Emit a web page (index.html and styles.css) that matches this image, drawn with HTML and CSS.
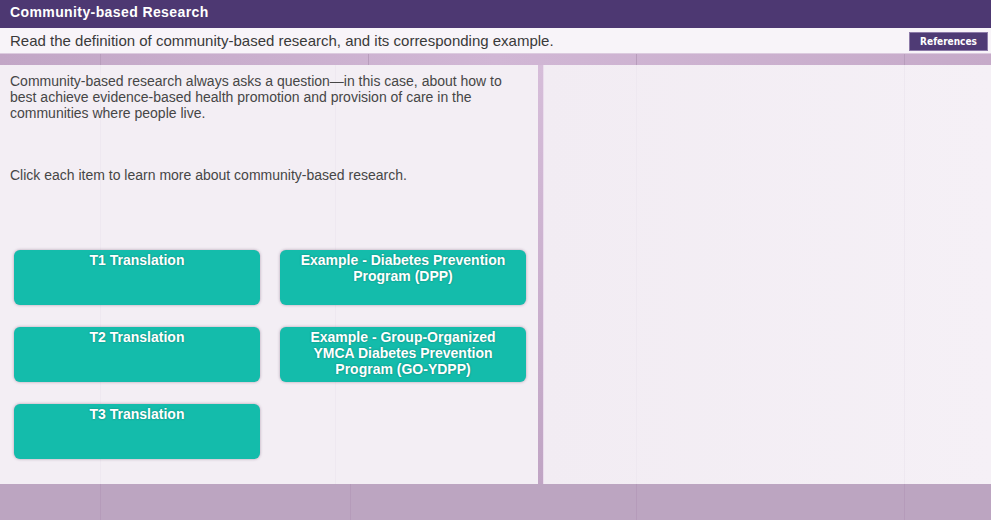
FILE: index.html
```html
<html>
  <head>
    <title>Community-based Research</title>
    <meta charset="utf-8" />
    <meta name="viewport" content="width=device-width, initial-scale=1" />
    <link rel="stylesheet" href="styles.css">
  </head>
  <body>
    <div class="title-bar">Community-based Research</div>
    <div class="instruction-bar">
      <span class="instruction">Read the definition of community-based research, and its corresponding example.</span>
      <button class="references">References</button>
    </div>
    <div class="strip"></div>
    <div class="content">
      <div class="left-panel">
        <p class="intro">Community-based research always asks a question&mdash;in this case, about how to best achieve evidence-based health promotion and provision of care in the communities where people live.</p>
        <p class="hint">Click each item to learn more about community-based research.</p>
        <div class="items">
          <div class="item">T1 Translation</div>
          <div class="item">Example - Diabetes Prevention Program (DPP)</div>
          <div class="item">T2 Translation</div>
          <div class="item">Example - Group-Organized YMCA Diabetes Prevention Program (GO-YDPP)</div>
          <div class="item">T3 Translation</div>
        </div>
      </div>
      <div class="divider"></div>
      <div class="right-panel"></div>
    </div>
    <div class="footer"></div>
  </body>
</html>
```

FILE: styles.css
```css
body {
  margin: 0;
  font-family: "Liberation Sans", Arial, sans-serif;
  background: #f3eef4;
  overflow: hidden;
}

.title-bar {
  height: 28px;
  line-height: 25px;
  padding-left: 10px;
  background: #4d3872;
  color: #fff;
  font-size: 14px;
  font-weight: bold;
  letter-spacing: 0.4px;
}

.instruction-bar {
  height: 25px;
  display: flex;
  align-items: center;
  justify-content: space-between;
  padding: 0 3px 0 10px;
  background: #f8f4f9;
  border-bottom: 1px solid #dccbdf;
}

.instruction {
  font-size: 15px;
  color: #3a3a3a;
  margin-top: -1px;
}

.references {
  width: 79px;
  height: 19px;
  margin-top: 1px;
  padding: 0;
  background: #4f3b75;
  border: 1px solid #8c7aa8;
  color: #fff;
  font-family: "DejaVu Sans Condensed", "DejaVu Sans", sans-serif;
  font-size: 10px;
  font-weight: bold;
}

.strip {
  height: 11px;
  background:
    linear-gradient(#b89dbc, #b89dbc) 100px 0 / 1px 100% no-repeat,
    linear-gradient(#b89dbc, #b89dbc) 368px 0 / 1px 100% no-repeat,
    linear-gradient(#b89dbc, #b89dbc) 636px 0 / 1px 100% no-repeat,
    linear-gradient(#b89dbc, #b89dbc) 904px 0 / 1px 100% no-repeat,
    linear-gradient(to right, #c2a6c6, #d1b7d5 50%, #c6aac9);
}

.content {
  display: flex;
  height: 419px;
}

.left-panel {
  width: 538px;
  padding-top: 8px;
  box-sizing: border-box;
  background:
    linear-gradient(#eee8f0, #eee8f0) 100px 0 / 1px 100% no-repeat,
    linear-gradient(#eee8f0, #eee8f0) 335px 0 / 1px 100% no-repeat,
    #f3eef4;
}

.intro, .hint {
  margin: 0;
  padding: 0 10px;
  font-size: 14px;
  line-height: 16px;
  color: #464646;
}

.intro {
  width: 515px;
}

.hint {
  margin-top: 46px;
}

.items {
  display: grid;
  grid-template-columns: 246px 246px;
  grid-auto-rows: 55px;
  column-gap: 20px;
  row-gap: 22px;
  margin: 67px 0 0 14px;
}

.item {
  background: #14bcab;
  border-radius: 6px;
  box-shadow: 0 0 3px rgba(90, 50, 90, 0.45);
  padding: 2px 14px 0;
  color: #fff;
  font-size: 14px;
  font-weight: bold;
  line-height: 16px;
  text-align: center;
  text-shadow: 0 0 2px rgba(0, 60, 50, 0.45);
  cursor: pointer;
}

.divider {
  width: 5px;
  border-right: 1px solid #eadcec;
  background: linear-gradient(#d6bdd9, #c0a4c4);
}

.right-panel {
  flex: 1;
  background:
    linear-gradient(#eee8f0, #eee8f0) 92px 0 / 1px 100% no-repeat,
    linear-gradient(#eee8f0, #eee8f0) 360px 0 / 1px 100% no-repeat,
    linear-gradient(to right, #f2ecf3, #f5f0f6);
}

.footer {
  height: 36px;
  background:
    linear-gradient(#b59bba, #b59bba) 100px 0 / 1px 100% no-repeat,
    linear-gradient(#b59bba, #b59bba) 350px 0 / 1px 100% no-repeat,
    linear-gradient(#b59bba, #b59bba) 636px 0 / 1px 100% no-repeat,
    linear-gradient(#b59bba, #b59bba) 904px 0 / 1px 100% no-repeat,
    #bca5c1;
}
```
